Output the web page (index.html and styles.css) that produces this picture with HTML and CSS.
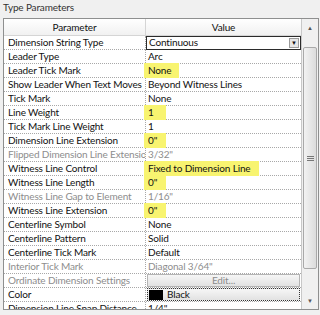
FILE: index.html
```html
<!DOCTYPE html>
<html lang="en">
<head>
    <meta charset="UTF-8">
    <title>Type Parameters</title>
    <link rel="stylesheet" href="styles.css">
</head>
<body>

    <div class="title">Type Parameters</div>

    <div class="panel">
        <div class="grid">
            <div class="head">
                <div class="hcell">Parameter</div>
                <div class="hcell">Value</div>
            </div>

            <div class="row">
                <div class="name">Dimension String Type</div>
                <div class="value combo"><span>Continuous</span><span class="drop">&#9660;</span></div>
            </div>
            <div class="row">
                <div class="name">Leader Type</div>
                <div class="value">Arc</div>
            </div>
            <div class="row">
                <div class="name">Leader Tick Mark</div>
                <div class="value"><span class="mark">None</span></div>
            </div>
            <div class="row">
                <div class="name">Show Leader When Text Moves</div>
                <div class="value">Beyond Witness Lines</div>
            </div>
            <div class="row">
                <div class="name">Tick Mark</div>
                <div class="value">None</div>
            </div>
            <div class="row">
                <div class="name">Line Weight</div>
                <div class="value"><span class="mark short">1</span></div>
            </div>
            <div class="row">
                <div class="name">Tick Mark Line Weight</div>
                <div class="value">1</div>
            </div>
            <div class="row">
                <div class="name">Dimension Line Extension</div>
                <div class="value"><span class="mark short">0"</span></div>
            </div>
            <div class="row off">
                <div class="name">Flipped Dimension Line Extensio</div>
                <div class="value">3/32"</div>
            </div>
            <div class="row">
                <div class="name">Witness Line Control</div>
                <div class="value"><span class="mark">Fixed to Dimension Line</span></div>
            </div>
            <div class="row">
                <div class="name">Witness Line Length</div>
                <div class="value"><span class="mark short">0"</span></div>
            </div>
            <div class="row off">
                <div class="name">Witness Line Gap to Element</div>
                <div class="value">1/16"</div>
            </div>
            <div class="row">
                <div class="name">Witness Line Extension</div>
                <div class="value"><span class="mark short">0"</span></div>
            </div>
            <div class="row">
                <div class="name">Centerline Symbol</div>
                <div class="value">None</div>
            </div>
            <div class="row">
                <div class="name">Centerline Pattern</div>
                <div class="value">Solid</div>
            </div>
            <div class="row">
                <div class="name">Centerline Tick Mark</div>
                <div class="value">Default</div>
            </div>
            <div class="row off">
                <div class="name">Interior Tick Mark</div>
                <div class="value">Diagonal 3/64"</div>
            </div>
            <div class="row off">
                <div class="name">Ordinate Dimension Settings</div>
                <div class="value"><div class="btn edit">Edit...</div></div>
            </div>
            <div class="row">
                <div class="name">Color</div>
                <div class="value"><div class="btn color"><span class="swatch"></span>Black</div></div>
            </div>
            <div class="row">
                <div class="name">Dimension Line Snap Distance</div>
                <div class="value">1/4"</div>
            </div>
        </div>

        <div class="scrollbar">
            <div class="arrow">&#9650;</div>
            <div class="track">
                <div class="thumb"><span class="grip"></span></div>
            </div>
            <div class="arrow">&#9660;</div>
        </div>
    </div>

</body>
</html>
```

FILE: styles.css
```css
* {
    box-sizing: border-box;
}

body {
    margin: 0;
    background: #f0f0f0;
    font-family: 'Lato', 'Liberation Sans', sans-serif;
    font-size: 10px;
    letter-spacing: -0.15px;
    color: #111;
    height: 315px;
    overflow: hidden;
}

.title {
    height: 18px;
    line-height: 14px;
    padding-left: 3px;
    color: #333;
}

.panel {
    display: flex;
    margin-left: 3px;
    margin-right: 1px;
    height: 292px;
    border: 1px solid #8e8f8f;
    background: #fff;
    overflow: hidden;
}

.grid {
    flex: 1;
    border-right: 1px solid #c8c8c8;
}

.head {
    display: grid;
    grid-template-columns: 142px 1fr;
    height: 17px;
    background: linear-gradient(#ffffff, #f1f1f1);
    border-bottom: 1px solid #d5d5d5;
}

.hcell {
    text-align: center;
    line-height: 16px;
    border-right: 1px solid #d5d5d5;
}

.hcell:last-child {
    border-right: none;
}

.row {
    display: grid;
    grid-template-columns: 142px 1fr;
    height: 14px;
    border-bottom: 1px dotted #a8a8a8;
    line-height: 13px;
}

.name {
    padding-left: 4px;
    border-right: 1px dotted #a8a8a8;
    white-space: nowrap;
    overflow: hidden;
}

.value {
    position: relative;
    padding-left: 2px;
    white-space: nowrap;
}

.off {
    color: #8d8d8d;
}

.mark {
    display: inline-block;
    height: 15px;
    margin: -1px 0 -2px -4px;
    padding: 1px 8px 0 4px;
    background: #f8f470;
    vertical-align: top;
}

.mark.short {
    min-width: 22px;
}

.combo {
    display: flex;
    justify-content: space-between;
    border: 1px solid #2b2b2b;
    line-height: 11px;
}

.drop {
    width: 10px;
    margin: 1px 1px 1px 0;
    font-size: 6px;
    text-align: center;
    background: #e6e6e6;
    border: 1px solid #9a9a9a;
    line-height: 8px;
}

.btn {
    height: 13px;
    margin: 0 1px 0 -1px;
    line-height: 11px;
    background: linear-gradient(#f6f6f6, #e2e2e2);
    border: 1px solid #b4b4b4;
}

.edit {
    text-align: center;
    color: #8d8d8d;
}

.color {
    border: 1px dotted #333;
    display: flex;
    align-items: center;
}

.swatch {
    width: 14px;
    height: 10px;
    background: #000;
    margin: 0 4px 0 1px;
}

.scrollbar {
    width: 16px;
    display: flex;
    flex-direction: column;
    background: #f0f0f0;
}

.arrow {
    height: 17px;
    font-size: 6px;
    line-height: 17px;
    text-align: center;
    color: #555;
}

.track {
    flex: 1;
    padding-top: 11px;
}

.thumb {
    height: 222px;
    margin: 0 1px;
    border: 1px solid #a9a9a9;
    border-radius: 2px;
    background: linear-gradient(90deg, #f2f2f2, #dcdcdc);
    display: flex;
    align-items: center;
    justify-content: center;
}

.grip {
    width: 7px;
    height: 5px;
    background: repeating-linear-gradient(#777 0 1px, transparent 1px 2px);
}
```
